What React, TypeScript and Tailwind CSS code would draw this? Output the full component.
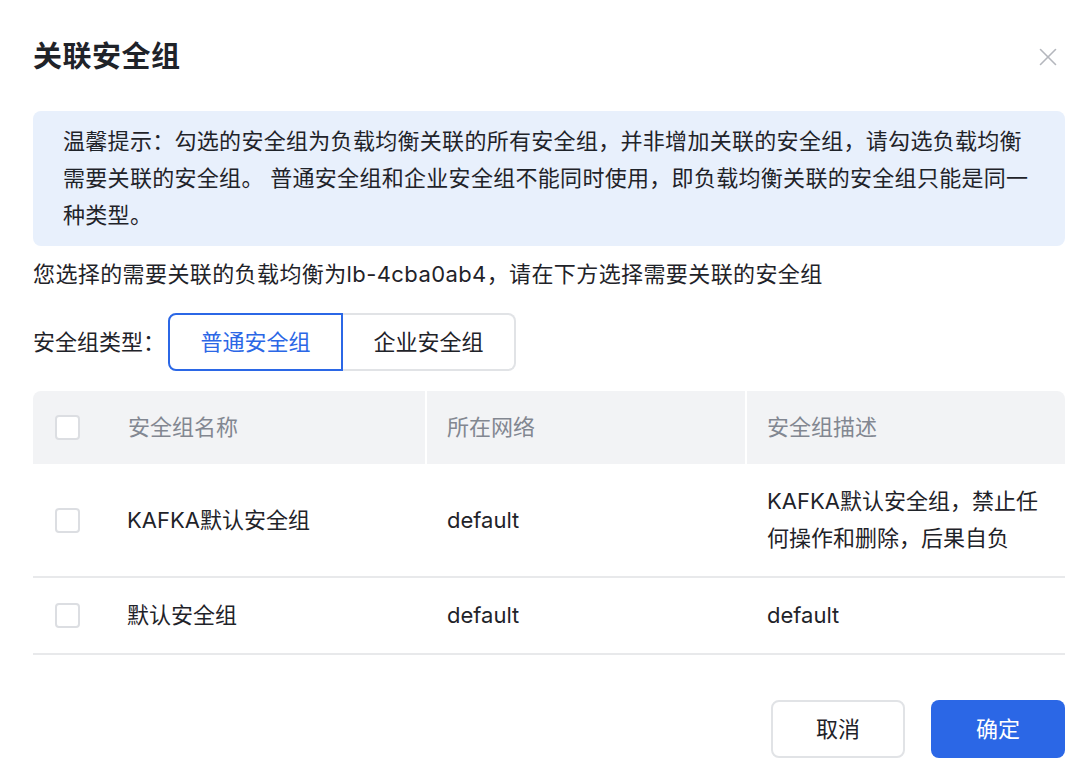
import { X } from 'lucide-react';

interface SecurityGroup {
  name: string;
  network: string;
  desc: string;
}

const groups: SecurityGroup[] = [
  { name: 'KAFKA默认安全组', network: 'default', desc: 'KAFKA默认安全组，禁止任何操作和删除，后果自负' },
  { name: '默认安全组', network: 'default', desc: 'default' },
];

function Checkbox() {
  return <span className="block w-[25px] h-[25px] rounded-[4px] border-2 border-[#dcdee2] bg-white" />;
}

export default function App() {
  return (
    <div
      className="w-[1078px] h-[765px] bg-white pl-[33px] pr-[13px] text-[#1f2329] text-[22px] leading-[37px]"
      style={{ fontFamily: 'Inter, "Noto Sans CJK SC", sans-serif' }}
    >
      {/* header */}
      <div className="flex items-center justify-between pt-[37px]">
        <h1 className="text-[29px] leading-[40px] font-bold tracking-[0.5px] text-[#1f2329]">关联安全组</h1>
        <button className="mr-[2px] text-[#b4b7bd]">
          <X size={30} strokeWidth={1.3} />
        </button>
      </div>

      {/* tip */}
      <div className="mt-[34px] rounded-[8px] bg-[#e8f0fc] pl-[30px] pr-[8px] py-[12px] tracking-[0.3px] text-[#1f2329] whitespace-nowrap">
        温馨提示：勾选的安全组为负载均衡关联的所有安全组，并非增加关联的安全组，请勾选负载均衡
        <br />
        需要关联的安全组。 普通安全组和企业安全组不能同时使用，即负载均衡关联的安全组只能是同一
        <br />
        种类型。
      </div>

      <p className="mt-[10px] tracking-[0.4px]">您选择的需要关联的负载均衡为lb-4cba0ab4，请在下方选择需要关联的安全组</p>

      {/* type switch */}
      <div className="mt-[20px] flex items-center">
        <span className="w-[135px]">安全组类型：</span>
        <div className="flex h-[58px]">
          <button className="w-[175px] rounded-l-[8px] border-2 border-[#2b67e6] text-[#2b67e6] bg-white">普通安全组</button>
          <button className="w-[173px] rounded-r-[8px] border-2 border-l-0 border-[#e1e3e6] text-[#1f2329] bg-white">企业安全组</button>
        </div>
      </div>

      {/* table */}
      <div className="mt-[20px]">
        <div className="grid grid-cols-[394px_320px_318px] h-[73px] bg-[#f2f3f5] rounded-t-[8px] text-[#828791]">
          <div className="flex items-center pl-[22px] border-r-2 border-white">
            <Checkbox />
            <span className="ml-[48px]">安全组名称</span>
          </div>
          <div className="flex items-center pl-[20px] border-r-2 border-white">所在网络</div>
          <div className="flex items-center pl-[20px]">安全组描述</div>
        </div>
        {groups.map((g) => (
          <div key={g.name} className="grid grid-cols-[394px_320px_318px] border-b-2 border-[#e8e9eb]">
            <div className="flex items-center pl-[22px] py-[19px]">
              <Checkbox />
              <span className="ml-[47px]">{g.name}</span>
            </div>
            <div className="flex items-center pl-[20px] py-[19px]">{g.network}</div>
            <div className="flex items-center pl-[20px] pr-[20px] py-[19px]">{g.desc}</div>
          </div>
        ))}
      </div>

      {/* footer */}
      <div className="mt-[45px] flex justify-end gap-[26px]">
        <button className="w-[134px] h-[58px] rounded-[8px] border-2 border-[#e1e3e6] bg-white text-[#1f2329]">取消</button>
        <button className="w-[134px] h-[58px] rounded-[8px] bg-[#2b67e6] text-white">确定</button>
      </div>
    </div>
  );
}
